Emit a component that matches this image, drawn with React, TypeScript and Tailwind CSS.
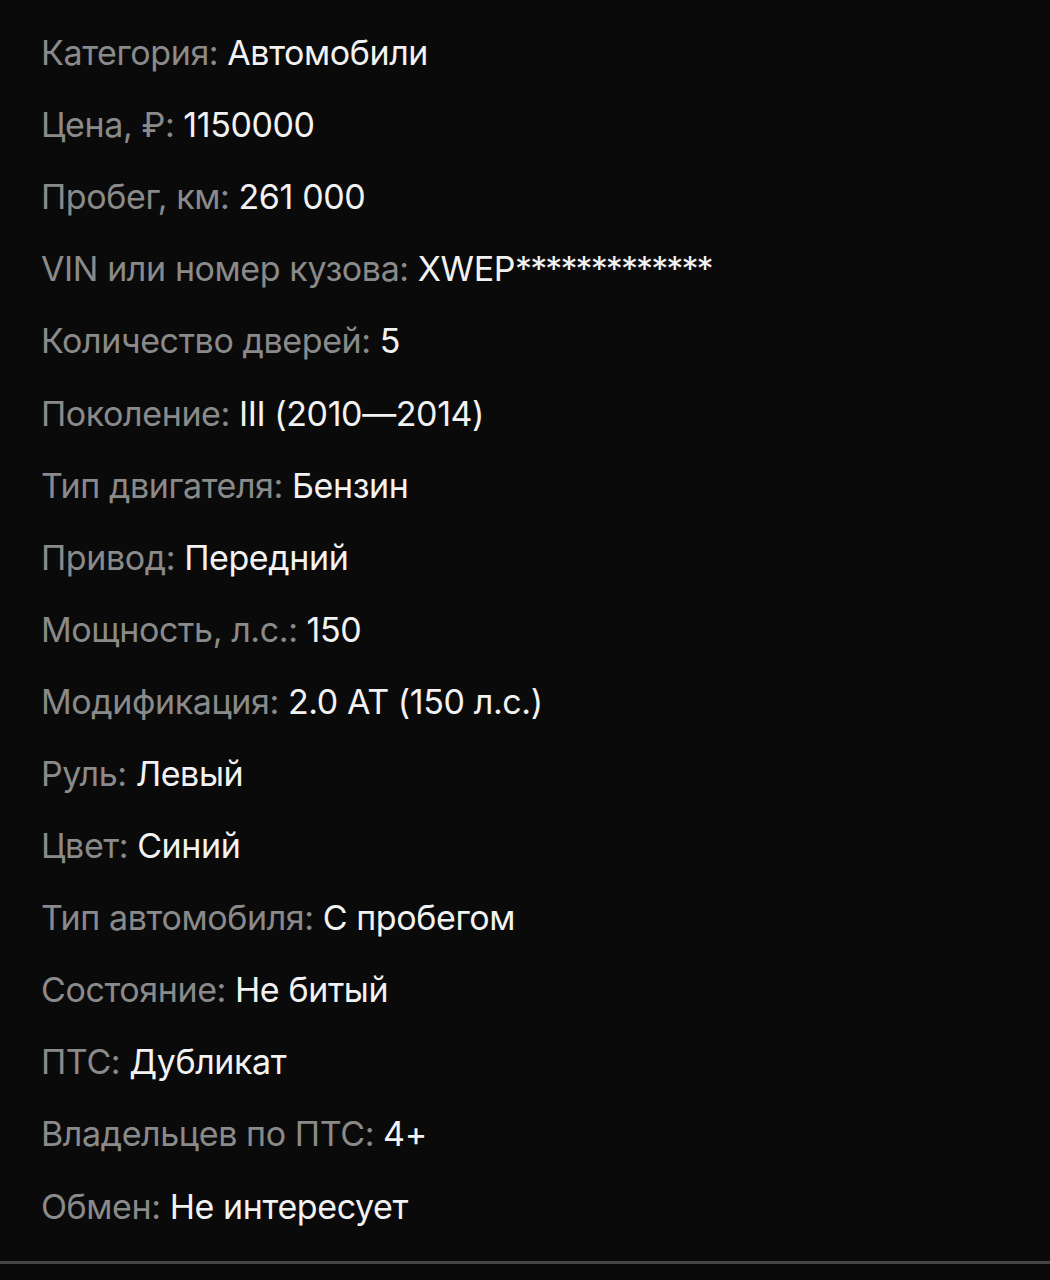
import React from "react";

const rows: [string, React.ReactNode][] = [
  ["Категория", "Автомобили"],
  ["Цена, ₽", "1150000"],
  ["Пробег, км", "261 000"],
  [
    "VIN или номер кузова",
    <>
      XWEP<span className="tracking-[-1.9px]">*************</span>
    </>,
  ],
  ["Количество дверей", "5"],
  ["Поколение", "III (2010—2014)"],
  ["Тип двигателя", "Бензин"],
  ["Привод", "Передний"],
  ["Мощность, л.с.", "150"],
  ["Модификация", "2.0 AT (150 л.с.)"],
  ["Руль", "Левый"],
  ["Цвет", "Синий"],
  ["Тип автомобиля", "С пробегом"],
  ["Состояние", "Не битый"],
  ["ПТС", "Дубликат"],
  ["Владельцев по ПТС", "4+"],
  ["Обмен", "Не интересует"],
];

export default function App() {
  return (
    <div
      className="w-[1050px] h-[1280px] bg-[#0a0a0a] flex flex-col overflow-hidden"
      style={{ fontFamily: "Inter, 'Noto Sans', sans-serif" }}
    >
      <div className="flex flex-col pt-[17px] pl-[41px]">
        {rows.map(([k, v]) => (
          <div key={k} className="h-[72.1px] flex items-center text-[34px] tracking-[-0.4px] leading-none">
            <span className="text-[#8a8a8a]">{k}:</span>
            <span className="text-[#f2f2f2] ml-[9px]">{v}</span>
          </div>
        ))}
      </div>
      <div className="mt-auto mb-[16px] h-[3px] bg-[#454545]" />
    </div>
  );
}
